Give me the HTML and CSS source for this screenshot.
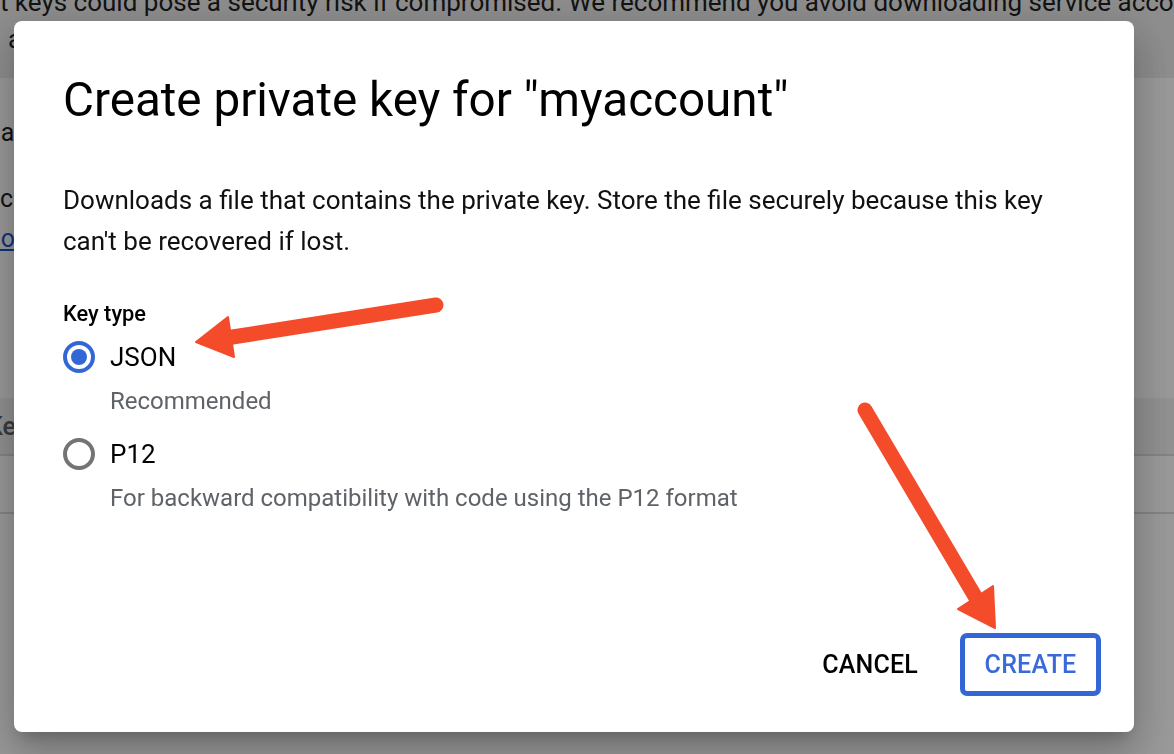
FILE: index.html
```html
<!DOCTYPE html>
<html lang="en">
<head>
<meta charset="utf-8">
<title>Create private key</title>
<link rel="stylesheet" href="styles.css">
</head>
<body>
<div class="page">
  <div class="banner">
    <p class="banner-line first">Service account keys could pose a security risk if compromised. We recommend you avoid downloading service account keys and instead use Workload Identity Federation.</p>
    <p class="banner-line second">authenticate service accounts on Google Cloud here.</p>
  </div>
  <p class="row row-a">Replace an existing key by adding a new key pair first.</p>
  <p class="row row-b">Block service account key creation using organization policies.</p>
  <p class="row row-c"><a href="#" class="link">Learn more about setting organization policies for service accounts</a></p>
  <div class="table">
    <div class="thead"><span class="th">Key</span></div>
    <div class="trow"></div>
  </div>
</div>
<div class="scrim"></div>

<div class="dialog" role="dialog">
  <h1 class="title">Create private key for "myaccount"</h1>
  <p class="desc">Downloads a file that contains the private key. Store the file securely because this key can't be recovered if lost.</p>
  <div class="field-label">Key type</div>
  <div class="options">
    <label class="option">
      <span class="radio checked"></span>
      <span class="opt-body">
        <span class="opt-name">JSON</span>
        <span class="opt-hint">Recommended</span>
      </span>
    </label>
    <label class="option">
      <span class="radio"></span>
      <span class="opt-body">
        <span class="opt-name">P12</span>
        <span class="opt-hint">For backward compatibility with code using the P12 format</span>
      </span>
    </label>
  </div>
  <div class="actions">
    <button class="btn cancel">CANCEL</button>
    <button class="btn create">CREATE</button>
  </div>
</div>

<svg class="annotations" width="1174" height="754" viewBox="0 0 1174 754" aria-hidden="true">
  <g fill="#f44b2b" stroke="#f44b2b">
    <line x1="436" y1="305" x2="226" y2="338" stroke-width="15" stroke-linecap="round"/>
    <polygon points="196,342 228,317 234,357" stroke-width="2" stroke-linejoin="round"/>
    <line x1="865" y1="410" x2="979" y2="603" stroke-width="15" stroke-linecap="round"/>
    <polygon points="993,586 958,609 995,628" stroke-width="2" stroke-linejoin="round"/>
  </g>
</svg>
</body>
</html>
```

FILE: styles.css
```css
* { box-sizing: border-box; }

html, body {
  margin: 0;
  padding: 0;
  width: 1174px;
  height: 754px;
  overflow: hidden;
  background: #ffffff;
  font-family: Roboto, "Noto Sans", "Liberation Sans", sans-serif;
  color: #202124;
}

/* background page */
.page {
  width: 1174px;
  height: 754px;
  background: #ffffff;
}

.banner {
  height: 78px;
  background: #ececec;
  overflow: hidden;
}

.banner-line {
  margin: 0;
  font-size: 26px;
  line-height: 37px;
  white-space: nowrap;
  color: #1f1f1f;
}

.banner-line.first {
  margin-top: -16px;
  margin-left: -176px;
}

.banner-line.second {
  margin-left: 8px;
  font-size: 25.5px;
}

.row {
  margin: 0;
  font-size: 25px;
  white-space: nowrap;
  color: #1f1f1f;
}

.row-a { margin-top: 40px; margin-left: -48px; line-height: 30px; }
.row-b { margin-top: 36px; margin-left: -36px; line-height: 30px; }
.row-c { margin-top: 10px; margin-left: -90px; line-height: 30px; }

.link {
  color: #1a56c8;
  text-decoration: underline;
}

.table {
  margin-top: 144px;
}

.thead {
  height: 58px;
  background: #f1f1f1;
  border-bottom: 2px solid #dcdcdc;
  display: flex;
  align-items: center;
}

.th {
  font-size: 25px;
  font-weight: 500;
  color: #5f6368;
  margin-left: -13px;
}

.trow {
  height: 58px;
  border-bottom: 2px solid #dcdcdc;
}

.scrim {
  position: fixed;
  inset: 0;
  background: rgba(0, 0, 0, 0.4);
}

/* dialog */
.dialog {
  position: fixed;
  left: 14px;
  top: 21px;
  width: 1120px;
  height: 711px;
  background: #ffffff;
  border-radius: 8px;
  padding: 50px 33px 36px 49px;
  display: flex;
  flex-direction: column;
  box-shadow: 0 11px 15px -7px rgba(0,0,0,.2), 0 24px 38px 3px rgba(0,0,0,.14), 0 9px 46px 8px rgba(0,0,0,.12);
}

.title {
  margin: 0;
  font-size: 47.6px;
  line-height: 59px;
  font-weight: 400;
  color: #000000;
}

.desc {
  margin: 50px 0 0 0;
  max-width: 1000px;
  font-size: 26px;
  line-height: 41px;
  color: #111111;
}

.field-label {
  margin-top: 38px;
  font-size: 21.8px;
  line-height: 28px;
  font-weight: 500;
  color: #000000;
}

.options {
  display: flex;
  flex-direction: column;
  gap: 16px;
  margin-top: 12px;
}

.option {
  display: flex;
  align-items: flex-start;
  gap: 15px;
}

.radio {
  flex: none;
  width: 32px;
  height: 32px;
  border-radius: 50%;
  border: 4px solid #747474;
  margin-top: 1px;
  display: flex;
  align-items: center;
  justify-content: center;
}

.radio.checked {
  border-color: #3367d6;
}

.radio.checked::after {
  content: "";
  width: 16px;
  height: 16px;
  border-radius: 50%;
  background: #3367d6;
}

.opt-body {
  display: flex;
  flex-direction: column;
}

.opt-name {
  font-size: 26px;
  line-height: 34px;
  color: #000000;
}

.opt-hint {
  margin-top: 7px;
  font-size: 24px;
  line-height: 40px;
  color: #5f6368;
}

.actions {
  margin-top: auto;
  display: flex;
  justify-content: flex-end;
  align-items: center;
  gap: 26px;
}

.btn {
  font-family: Roboto, "Noto Sans", "Liberation Sans", sans-serif;
  font-size: 25px;
  font-weight: 500;
  letter-spacing: 0.2px;
  background: #ffffff;
  cursor: pointer;
}

.cancel {
  border: none;
  color: #000000;
  padding: 0 16px;
  height: 63px;
}

.create {
  height: 63px;
  width: 141px;
  border: 5px solid #3367d6;
  border-radius: 7px;
  color: #3a6ad8;
  padding: 0;
}

.annotations {
  position: fixed;
  left: 0;
  top: 0;
  pointer-events: none;
}
```
